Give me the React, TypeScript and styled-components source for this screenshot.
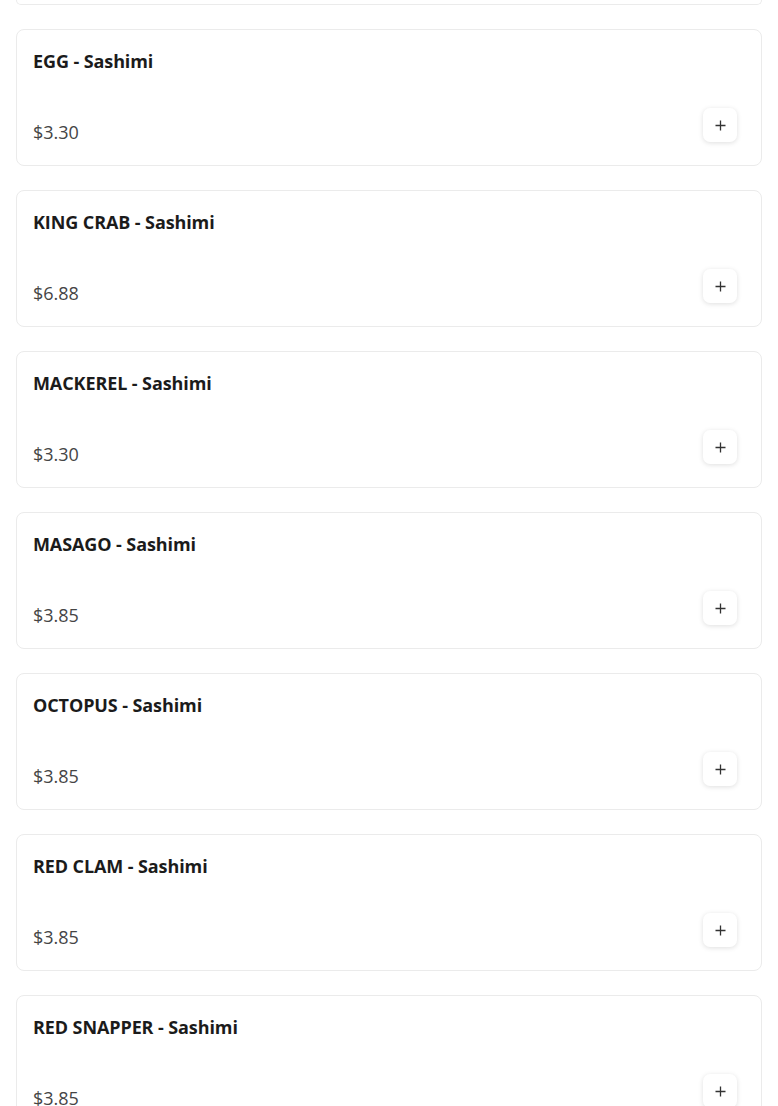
import React from "react";
import styled, { createGlobalStyle } from "styled-components";

const GlobalStyle = createGlobalStyle`
  html, body {
    margin: 0;
    padding: 0;
    background: #ffffff;
    overflow: hidden;
  }
  body {
    font-family: "Open Sans", "DejaVu Sans", sans-serif;
  }
`;

const MenuList = styled.div`
  display: flex;
  flex-direction: column;
  gap: 24px;
  padding: 0 16px;
`;

// bottom edge of the card scrolled above the viewport
const CardTail = styled.div`
  height: 5px;
  box-sizing: border-box;
  border: 1px solid #ebebeb;
  border-top: none;
  border-radius: 0 0 8px 8px;
`;

const Card = styled.div`
  display: flex;
  flex-direction: column;
  height: 137px;
  box-sizing: border-box;
  padding: 16px 16px 23px;
  border: 1px solid #ebebeb;
  border-radius: 8px;
  background: #fff;
`;

const Title = styled.div`
  font-size: 18px;
  line-height: 30px;
  font-weight: 700;
  color: #1b1b1b;
  letter-spacing: -0.1px;
`;

const Footer = styled.div`
  margin-top: auto;
  display: flex;
  justify-content: space-between;
  align-items: flex-end;
`;

const Price = styled.span`
  font-size: 18px;
  line-height: 20px;
  color: #454545;
`;

const AddButton = styled.button`
  width: 34px;
  height: 34px;
  margin: 0 8px 0 0;
  padding: 0;
  border: none;
  border-radius: 7px;
  background: #fff;
  box-shadow: 0 1px 5px rgba(0, 0, 0, 0.13);
  display: flex;
  align-items: center;
  justify-content: center;
  cursor: pointer;
`;

const PlusIcon = () => (
  <svg width="11" height="11" viewBox="0 0 11 11">
    <path d="M5.5 0.5v10M0.5 5.5h10" stroke="#333" strokeWidth="1.3" />
  </svg>
);

const items = [
  { name: "EGG - Sashimi", price: 3.3 },
  { name: "KING CRAB - Sashimi", price: 6.88 },
  { name: "MACKEREL - Sashimi", price: 3.3 },
  { name: "MASAGO - Sashimi", price: 3.85 },
  { name: "OCTOPUS - Sashimi", price: 3.85 },
  { name: "RED CLAM - Sashimi", price: 3.85 },
  { name: "RED SNAPPER - Sashimi", price: 3.85 },
];

const App = () => {
  return (
    <>
      <GlobalStyle />
      <MenuList>
        <CardTail />
        {items.map((item) => (
          <Card key={item.name}>
            <Title>{item.name}</Title>
            <Footer>
              <Price>${item.price.toFixed(2)}</Price>
              <AddButton aria-label="Add">
                <PlusIcon />
              </AddButton>
            </Footer>
          </Card>
        ))}
      </MenuList>
    </>
  );
};

export default App;
